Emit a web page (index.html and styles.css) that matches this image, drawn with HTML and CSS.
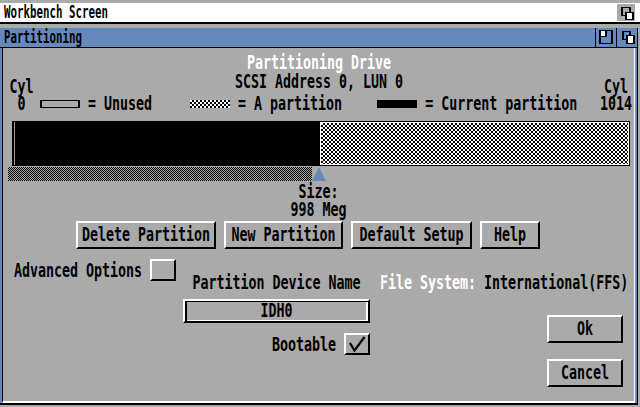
FILE: index.html
```html
<!DOCTYPE html>
<html>
<head>
<meta charset="utf-8">
<title>Partitioning</title>
<link rel="stylesheet" href="styles.css">
</head>
<body>
<header class="scrbar">
  <span class="stitle"><span class="tx">Workbench Screen</span></span>
  <div class="sgad">
    <svg width="18" height="17" viewBox="0 0 18 17" shape-rendering="crispEdges">
      <rect x="4" y="3" width="10" height="9" fill="#000"/>
      <rect x="6" y="4" width="6" height="7" fill="#aaa"/>
      <rect x="8" y="8" width="9" height="8" fill="#000"/>
      <rect x="10" y="9" width="5" height="6" fill="#fff"/>
    </svg>
  </div>
</header>

<div class="win">
  <div class="wtitle">
    <span class="wname"><span class="tx">Partitioning</span></span>
    <div class="wgad">
      <svg width="20" height="19" viewBox="0 0 20 19" shape-rendering="crispEdges">
        <rect x="3" y="2" width="14" height="14" fill="#000"/>
        <rect x="5" y="3" width="10" height="12" fill="#6688bb"/>
        <rect x="5" y="3" width="6" height="6" fill="#000"/>
        <rect x="5" y="3" width="4" height="5" fill="#fff"/>
      </svg>
    </div>
    <div class="wgad">
      <svg width="20" height="19" viewBox="0 0 20 19" shape-rendering="crispEdges">
        <rect x="5" y="3" width="9" height="9" fill="#000"/>
        <rect x="7" y="4" width="5" height="7" fill="#6688bb"/>
        <rect x="9" y="7" width="9" height="9" fill="#000"/>
        <rect x="11" y="8" width="5" height="7" fill="#fff"/>
      </svg>
    </div>
  </div>

  <div class="wframe">
    <main class="wbody">
      <section class="head">
        <div class="cyl">
          <div class="ln"><span class="tx">Cyl</span></div>
          <div class="ln gap1"><span class="tx">0</span></div>
        </div>
        <div class="mid">
          <div class="ln center white"><span class="tx">Partitioning Drive</span></div>
          <div class="ln center gap3"><span class="tx">SCSI Address 0, LUN 0</span></div>
          <div class="legend">
            <span class="sw sw-empty"></span>
            <span class="lgt"><span class="tx">= Unused</span></span>
            <span class="sw sw-check far1"></span>
            <span class="lgt"><span class="tx">= A partition</span></span>
            <span class="sw sw-black far2"></span>
            <span class="lgt"><span class="tx">= Current partition</span></span>
          </div>
        </div>
        <div class="cyl">
          <div class="ln"><span class="tx">Cyl</span></div>
          <div class="ln gap1"><span class="tx">1014</span></div>
        </div>
      </section>

      <div class="bar">
        <div class="bar-used"></div>
        <div class="bar-free"></div>
      </div>

      <div class="slider">
        <div class="hatch"></div>
        <svg class="knob" width="14" height="14" viewBox="0 0 14 14">
          <polygon points="7,0 14,14 0,14" fill="#6688bb"/>
        </svg>
      </div>

      <div class="size">
        <div class="ln"><span class="tx">Size:</span></div>
        <div class="ln gap2"><span class="tx">998 Meg</span></div>
      </div>

      <div class="btnrow">
        <button class="btn w-del"><span class="tx">Delete Partition</span></button>
        <button class="btn w-new"><span class="tx">New Partition</span></button>
        <button class="btn w-def"><span class="tx">Default Setup</span></button>
        <button class="btn w-help"><span class="tx">Help</span></button>
      </div>

      <div class="lower">
        <div class="col1">
          <div class="adv">
            <span class="tx">Advanced Options</span>
            <span class="cb"></span>
          </div>
        </div>
        <div class="col2">
          <div class="ln center"><span class="tx">Partition Device Name</span></div>
          <div class="field"><span class="tx">IDH0</span></div>
          <div class="boot">
            <span class="tx">Bootable</span>
            <span class="cb">
              <svg width="22" height="18" viewBox="0 0 22 18">
                <polyline points="4,8 8.5,15.5 18.5,2" fill="none" stroke="#000" stroke-width="2.2"/>
              </svg>
            </span>
          </div>
        </div>
        <div class="col3">
          <div class="ln"><span class="tx"><span class="white">File System:</span> International(FFS)</span></div>
          <div class="okcol">
            <button class="btn w-ok"><span class="tx">Ok</span></button>
            <button class="btn w-ok gap16"><span class="tx">Cancel</span></button>
          </div>
        </div>
      </div>
    </main>
  </div>
</div>
</body>
</html>
```

FILE: styles.css
```css
* {
  box-sizing: border-box;
  margin: 0;
  padding: 0;
}

html, body {
  width: 640px;
  height: 407px;
  overflow: hidden;
}

body {
  background: #aaaaaa;
  font: bold 13.3px/16px "DejaVu Sans Mono", monospace;
  color: #000;
}

.tx {
  display: inline-block;
  white-space: pre;
  line-height: 11px;
  transform: scaleY(1.4);
}

.white { color: #fff; }
.center { text-align: center; }
.ln { height: 16px; line-height: 16px; white-space: pre; }

/* Screen title bar */
.scrbar {
  margin-top: 3px;
  height: 21px;
  background: #fff;
  border-bottom: 2px solid #000;
  display: flex;
  justify-content: space-between;
  align-items: flex-start;
}
.stitle {
  font-size: 10.8px;
  line-height: 19px;
  padding-left: 4px;
}
.stitle .tx, .wname .tx { transform: scaleY(1.65); line-height: 9px; }
.sgad {
  width: 18px;
  height: 17px;
  margin: 1px 5px 0 0;
  background: #aaaaaa;
}
.sgad svg, .wgad svg { display: block; }

/* Window */
.win {
  margin-top: 4px;
  width: 638px;
  height: 377px;
  background: #6688bb;
  border-right: 1px solid #000;
  border-bottom: 2px solid #000;
  display: flex;
  flex-direction: column;
}
.wtitle {
  height: 20px;
  border-bottom: 1px solid #000;
  display: flex;
  align-items: flex-start;
}
.wname {
  flex: 1;
  font-size: 10.8px;
  line-height: 19px;
  padding-left: 4px;
}
.wgad {
  width: 21px;
  height: 19px;
  border-left: 1px solid #000;
}
.wframe {
  flex: 1;
  min-width: 0;
  padding: 0 2px;
  display: flex;
}
.wbody {
  flex: 1;
  min-width: 0;
  background: #aaaaaa;
  border-left: 1px solid #000;
  border-right: 1px solid #fff;
  border-bottom: 2px solid #fff;
}

/* Header */
.head {
  display: grid;
  grid-template-columns: 37px minmax(0, 1fr) 36px;
  height: 64px;
}
.cyl {
  text-align: center;
  padding-top: 31px;
}
.mid { padding-top: 7px; }
.gap1 { margin-top: 1px; }
.gap3 { margin-top: 3px; }
.gap2 { margin-top: 2px; }
.legend {
  margin-top: 6px;
  height: 16px;
  display: flex;
  align-items: center;
  line-height: 16px;
}
.sw {
  width: 40px;
  height: 8px;
  flex: none;
}
.sw-empty {
  border: 1px solid #000;
  border-left-width: 2px;
  border-right-width: 2px;
}
.sw-check {
  background: repeating-conic-gradient(#000 0 25%, #fff 0 50%) 0 0 / 4px 4px;
}
.sw-black { background: #000; }
.far1 { margin-left: 38px; }
.far2 { margin-left: 35px; }
.lgt { margin-left: 8px; }

/* Partition bar */
.bar {
  margin: 9px 0 0 9px;
  width: 618px;
  height: 45px;
  border: 1px solid #000;
  display: flex;
}
.bar-used {
  width: 307px;
  background: #000;
  box-shadow: inset 1px 0 #000, inset 2px 0 #9a9a9a;
}
.bar-free {
  flex: 1;
  border: 1px solid #fff;
  background: repeating-conic-gradient(#000 0 25%, #fff 0 50%) 0 0 / 4px 4px;
}

.slider {
  margin: 1px 0 0 5px;
  height: 14px;
  display: flex;
}
.hatch {
  width: 304px;
  height: 14px;
  background: repeating-conic-gradient(#000 0 25%, #aaaaaa 0 50%) 0 0 / 2px 2px;
}
.knob { display: block; }

.size {
  margin-top: 3px;
  text-align: center;
}

/* Buttons */
.btn {
  height: 28px;
  border: 2px solid;
  border-color: #fff #000 #000 #fff;
  background: #aaaaaa;
  font: inherit;
  color: #000;
  line-height: 24px;
  text-align: center;
  white-space: pre;
}
.w-del { width: 140px; }
.w-new { width: 119px; }
.w-def { width: 121px; }
.w-help { width: 60px; }
.w-ok { width: 76px; }
.gap16 { margin-top: 16px; }

.btnrow {
  margin-top: 3px;
  padding-left: 73px;
  display: flex;
  gap: 8px;
}

/* Lower area */
.lower {
  margin-top: 10px;
  display: flex;
}
.col1 {
  width: 180px;
  flex: none;
  padding-left: 11px;
}
.adv, .boot {
  height: 22px;
  display: flex;
  align-items: center;
  gap: 8px;
}
.cb {
  width: 26px;
  height: 22px;
  border: 2px solid;
  border-color: #fff #000 #000 #fff;
  flex: none;
}
.cb svg { display: block; }
.col2 {
  width: 187px;
  flex: none;
  padding-top: 16px;
}
.field {
  margin-top: 8px;
  height: 24px;
  border: 2px solid;
  border-color: #fff #000 #000 #fff;
  box-shadow: inset 2px 1px 0 #000, inset -2px -1px 0 #fff;
  text-align: center;
  line-height: 20px;
}
.boot {
  margin-top: 10px;
  justify-content: flex-end;
}
.col3 {
  flex: 1;
  min-width: 0;
  padding: 16px 11px 0 10px;
}
.okcol {
  margin-top: 24px;
  display: flex;
  flex-direction: column;
  align-items: flex-end;
}
```
